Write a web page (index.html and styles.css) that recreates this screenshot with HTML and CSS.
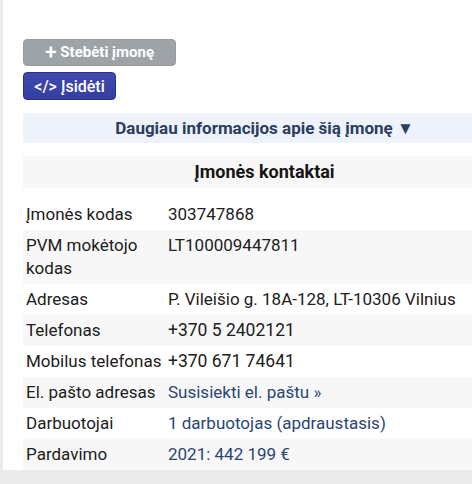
FILE: index.html
```html
<!DOCTYPE html>
<html lang="lt">
<head>
<meta charset="utf-8">
<link rel="stylesheet" href="styles.css">
</head>
<body>
<div class="card">
  <div class="actions">
    <button class="btn btn-grey"><span class="plus">+</span> Stebėti įmonę</button>
    <button class="btn btn-blue">&lt;/&gt; Įsidėti</button>
  </div>
  <div class="more">Daugiau informacijos apie šią įmonę <span class="tri">▼</span></div>
  <div class="section-title">Įmonės kontaktai</div>
  <table class="info">
    <tr><td class="lbl">Įmonės kodas</td><td class="val">303747868</td></tr>
    <tr class="alt"><td class="lbl">PVM mokėtojo kodas</td><td class="val">LT100009447811</td></tr>
    <tr><td class="lbl">Adresas</td><td class="val">P. Vileišio g. 18A-128, LT-10306 Vilnius</td></tr>
    <tr class="alt"><td class="lbl">Telefonas</td><td class="val phone">+370 5 2402121</td></tr>
    <tr><td class="lbl nowrap">Mobilus telefonas</td><td class="val phone">+370 671 74641</td></tr>
    <tr class="alt"><td class="lbl nowrap">El. pašto adresas</td><td class="val link">Susisiekti el. paštu »</td></tr>
    <tr><td class="lbl">Darbuotojai</td><td class="val link">1 darbuotojas (apdraustasis)</td></tr>
    <tr class="alt"><td class="lbl">Pardavimo</td><td class="val link">2021: 442 199 €</td></tr>
  </table>
</div>
</body>
</html>
```
FILE: styles.css
```css
html, body {
  margin: 0;
  padding: 0;
}
body {
  background: #ebebeb;
  font-family: Roboto, "Liberation Sans", sans-serif;
  color: #1e1e1e;
  width: 472px;
  height: 484px;
  overflow: hidden;
}
.card {
  margin-left: 3px;
  background: #ffffff;
  height: 431px;
  padding: 39px 0 0 20px;
}
.actions {
  display: flex;
  flex-direction: column;
  align-items: flex-start;
  gap: 6px;
}
.btn {
  font-family: Roboto, "Liberation Sans", sans-serif;
  font-weight: 700;
  font-size: 15px;
  color: #ffffff;
  border-radius: 4px;
  height: 27px;
  padding: 0;
  line-height: 25px;
}
.btn-grey {
  width: 153px;
  background: #9ea3a8;
  border: 1px solid #979ca1;
}
.plus {
  font-size: 21px;
  font-weight: 500;
  vertical-align: -2px;
}
.btn-blue {
  width: 93px;
  height: 28px;
  background: linear-gradient(#4049ad, #353ea0);
  border: 1px solid #2b3188;
  font-weight: 500;
  font-size: 16px;
}
.more {
  margin-top: 13px;
  background: #eef2fa;
  height: 30px;
  line-height: 30px;
  text-align: center;
  color: #2b3d5f;
  font-weight: 700;
  font-size: 17px;
  padding-left: 34px;
}
.tri {
  font-size: 17px;
  color: #2a3e66;
}
.section-title {
  margin-top: 13px;
  background: #f7f7f7;
  height: 32px;
  line-height: 32px;
  text-align: center;
  font-weight: 700;
  font-size: 18px;
  color: #151515;
  padding-left: 34px;
}
.info {
  margin-top: 11px;
  border-collapse: collapse;
  width: 100%;
  font-size: 17px;
  color: #202020;
}
.info td {
  padding: 4px 3px 4px 3px;
  line-height: 23px;
  vertical-align: top;
}
.info tr.alt {
  background: #f7f7f7;
}
.info td.lbl {
  width: 142px;
  padding-right: 0;
}
.info td.val {
  font-size: 17px;
  padding-left: 0;
}
.info td.phone {
  font-size: 17.5px;
}
.nowrap {
  white-space: nowrap;
}
.info td.link {
  color: #2a4675;
}
```
